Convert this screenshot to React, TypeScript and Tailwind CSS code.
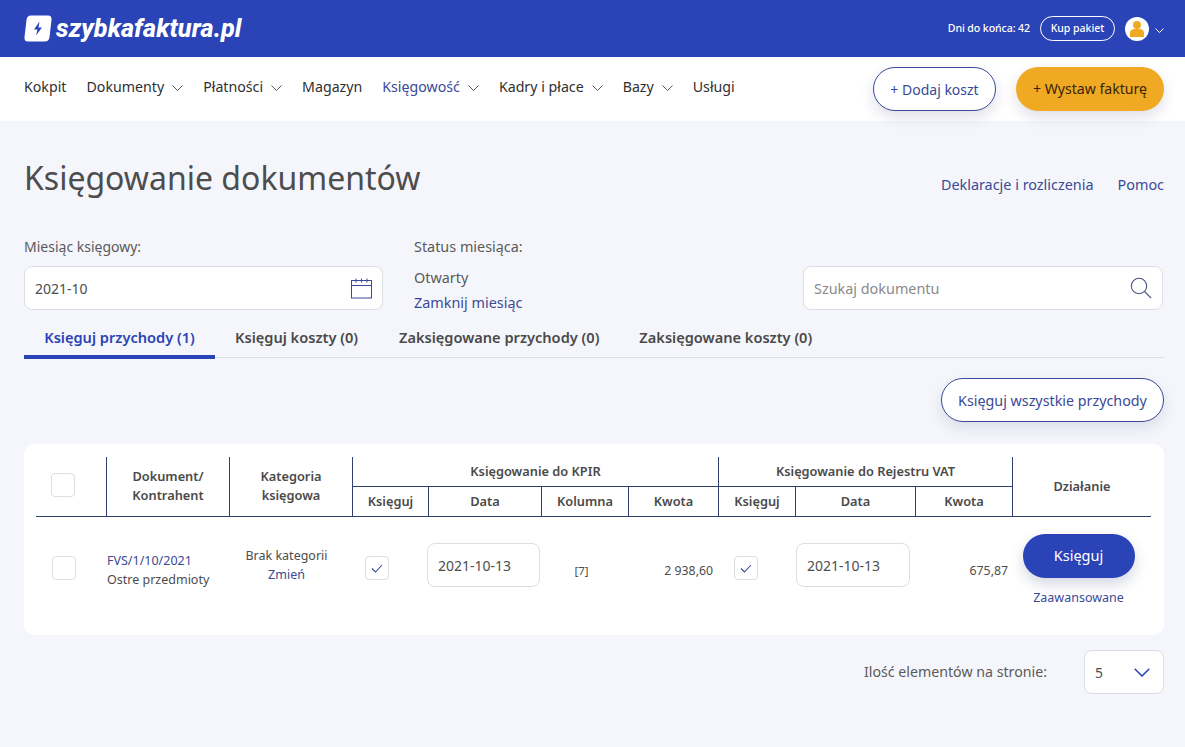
import React from "react";

const Chev = ({ className = "" }: { className?: string }) => (
  <svg width="11" height="6" viewBox="0 0 11 6" fill="none" stroke="#444" strokeWidth="0.9" className={className}>
    <path d="M0.5 0.5 L5.5 5.5 L10.5 0.5" />
  </svg>
);

const Nav = ({ children, chev, active }: { children: React.ReactNode; chev?: boolean; active?: boolean }) => (
  <div className={`flex items-center gap-[8px] text-[14.2px] ${active ? "text-[#3a4a96]" : "text-[#2f2f2f]"}`}>
    <span>{children}</span>
    {chev && <Chev className="mt-[3px]" />}
  </div>
);

const Check = ({ checked }: { checked?: boolean }) => (
  <div className="w-[24px] h-[24px] bg-white border border-[#dcdee6] rounded-[4px] flex items-center justify-center">
    {checked && (
      <svg width="12" height="9" viewBox="0 0 12 9" fill="none" stroke="#3a4a96" strokeWidth="1.1">
        <path d="M1 4.5 L4.5 8 L11 1" />
      </svg>
    )}
  </div>
);

const H = ({ className = "", children }: { className?: string; children?: React.ReactNode }) => (
  <div className={`flex items-center justify-center text-center text-[12.8px] font-semibold leading-[19px] text-[#4a4a4a] ${className}`}>
    {children}
  </div>
);

export default function App() {
  return (
    <div className="w-[1185px] h-[747px] overflow-hidden bg-[#f5f6fb] text-[#4d4d4d] font-['Noto_Sans','Open_Sans',sans-serif]">
      <header className="h-[57px] bg-[#2a43b7] flex items-center justify-between pl-[24px] pr-[21px]">
        <div className="flex items-center gap-[4px]">
          <svg width="28" height="27" viewBox="0 0 28 27">
            <path d="M7 0.5 H24 Q28 0.5 27.5 5 L25.5 22 Q25 26.5 20.5 26.5 H4 Q0 26.5 0.5 22 L2.5 5 Q3 0.5 7 0.5 Z" fill="#fff" />
            <path d="M15.5 6.5 L10 14.5 H13.5 L12 20.5 L18 12.5 H14.5 Z" fill="#2a43b7" />
          </svg>
          <span className="text-white text-[25.2px] font-extrabold italic tracking-[0.1px] font-['Roboto',sans-serif] leading-none">szybkafaktura.pl</span>
        </div>
        <div className="flex items-center">
          <span className="text-white text-[10.6px] font-medium tracking-[-0.1px]">Dni do końca: 42</span>
          <div className="ml-[10px] w-[75px] h-[25px] rounded-full border border-white text-white text-[10.5px] font-medium flex items-center justify-center">Kup pakiet</div>
          <div className="ml-[10px] w-[24px] h-[24px] rounded-full bg-white flex items-center justify-center">
            <svg width="16" height="17" viewBox="0 0 16 17" fill="#f0a922">
              <circle cx="8" cy="5" r="4" />
              <path d="M1 17 V13 Q1 9.5 5 9 H11 Q15 9.5 15 13 V17 Z" />
            </svg>
          </div>
          <svg width="9" height="5" viewBox="0 0 9 5" fill="none" stroke="#fff" strokeWidth="1" className="ml-[6px] mt-[4px]">
            <path d="M0.5 0.5 L4.5 4.5 L8.5 0.5" />
          </svg>
        </div>
      </header>

      <nav className="h-[64px] bg-white flex items-center justify-between pl-[24px] pr-[21px]">
        <div className="flex items-center gap-[20px] -mt-[4px]">
          <Nav>Kokpit</Nav>
          <Nav chev>Dokumenty</Nav>
          <Nav chev>Płatności</Nav>
          <Nav>Magazyn</Nav>
          <Nav chev active>Księgowość</Nav>
          <Nav chev>Kadry i płace</Nav>
          <Nav chev>Bazy</Nav>
          <Nav>Usługi</Nav>
        </div>
        <div className="flex items-center gap-[20px]">
          <div className="w-[123px] h-[44px] rounded-full bg-white border border-[#3a4a96] text-[#3a4a96] text-[14px] flex items-center justify-center shadow-[0_6px_14px_rgba(40,50,110,0.15)]">+ Dodaj koszt</div>
          <div className="w-[148px] h-[44px] rounded-full bg-[#f0a922] text-[#3a2408] text-[14.1px] flex items-center justify-center shadow-[0_6px_14px_rgba(40,50,110,0.15)]">+ Wystaw fakturę</div>
        </div>
      </nav>

      <main className="pl-[24px] pr-[21px]">
        <div className="flex items-start justify-between pt-[34px] h-[110px]">
          <h1 className="text-[32px] leading-[46px] text-[#4d4d4d]">Księgowanie dokumentów</h1>
          <div className="flex gap-[24px] text-[14.4px] text-[#3a4a96] pt-[19px]">
            <span>Deklaracje i rozliczenia</span>
            <span>Pomoc</span>
          </div>
        </div>

        <div className="flex h-[93px] items-start">
          <div className="w-[359px]">
            <div className="text-[14px] leading-[20px] mb-[9px] mt-[6px] text-[#5a5a5a]">Miesiąc księgowy:</div>
            <div className="h-[44px] bg-white border border-[#dcdee6] rounded-[8px] flex items-center justify-between pl-[10px] pr-[10px] text-[14px]">
              <span className="pt-[1px]">2021-10</span>
              <svg width="21" height="21" viewBox="0 0 21 21" fill="none" stroke="#3a4a96" strokeWidth="1">
                <rect x="0.5" y="2.5" width="20" height="17.5" />
                <path d="M0.5 7.5 H20.5 M5 0.5 V4.5 M10.5 0.5 V4.5 M16 0.5 V4.5" />
              </svg>
            </div>
          </div>
          <div className="ml-[31px] w-[389px]">
            <div className="text-[14.4px] leading-[20px] mt-[6px] text-[#5a5a5a]">Status miesiąca:</div>
            <div className="text-[14.4px] leading-[20px] mt-[11px] text-[#5a5a5a]">Otwarty</div>
            <div className="text-[14.4px] leading-[20px] mt-[5px] text-[#3a4a96]">Zamknij miesiąc</div>
          </div>
          <div className="w-[360px] h-[44px] mt-[35px] bg-white border border-[#dcdee6] rounded-[8px] flex items-center justify-between pl-[10px] pr-[10px] text-[14.4px] text-[#8a8a8a]">
            <span className="pt-[1px]">Szukaj dokumentu</span>
            <svg width="22" height="22" viewBox="0 0 22 22" fill="none" stroke="#4a5580" strokeWidth="1.1">
              <circle cx="9" cy="9" r="7.7" />
              <path d="M14.5 14.5 L21 21" />
            </svg>
          </div>
        </div>

        <div className="flex h-[34px] border-b border-[#dcdee6] w-[1140px] text-[14.6px] font-semibold text-[#4a4a4a] leading-[20px]">
          <div className="w-[191px] h-[35px] pt-[3px] text-center text-[#2a43b7] border-b-[4px] border-[#2a43b7]">Księguj przychody (1)</div>
          <div className="ml-[20px] pt-[3px]">Księguj koszty (0)</div>
          <div className="ml-[41px] pt-[3px]">Zaksięgowane przychody (0)</div>
          <div className="ml-[40px] pt-[3px]">Zaksięgowane koszty (0)</div>
        </div>

        <div className="flex justify-end h-[86px] pt-[20px] w-[1140px]">
          <div className="w-[223px] h-[44px] pt-[1px] rounded-full bg-white border border-[#3a4a96] text-[#3a4a96] text-[14.3px] flex items-center justify-center shadow-[0_6px_14px_rgba(40,50,110,0.12)]">Księguj wszystkie przychody</div>
        </div>

        <section className="w-[1140px] h-[191px] bg-white rounded-[10px] pt-[13px] pl-[12px] pr-[13px]">
          <div className="grid grid-cols-[70px_123px_123px_76px_113px_87px_90px_77px_120px_97px_139px] grid-rows-[30px_29px] border-b border-[#2f3f6e]">
            <div className="row-span-2 flex items-center pl-[15px] pb-[4px]"><Check /></div>
            <H className="row-span-2 border-l border-[#2f3f6e] pb-[2px]">Dokument/<br />Kontrahent</H>
            <H className="row-span-2 border-l border-[#2f3f6e] pb-[2px]">Kategoria<br />księgowa</H>
            <H className="col-span-4 border-l border-b border-[#2f3f6e]">Księgowanie do KPIR</H>
            <H className="col-span-3 border-l border-b border-[#2f3f6e]">Księgowanie do Rejestru VAT</H>
            <H className="row-span-2 border-l border-[#2f3f6e]">Działanie</H>
            <H className="border-l border-[#2f3f6e]">Księguj</H>
            <H className="border-l border-[#2f3f6e]">Data</H>
            <H className="border-l border-[#2f3f6e]">Kolumna</H>
            <H className="border-l border-[#2f3f6e]">Kwota</H>
            <H className="border-l border-[#2f3f6e]">Księguj</H>
            <H className="border-l border-[#2f3f6e]">Data</H>
            <H className="border-l border-[#2f3f6e]">Kwota</H>
          </div>
          <div className="grid grid-cols-[70px_123px_123px_76px_113px_87px_90px_77px_120px_97px_139px] h-[100px] items-center text-[12.5px]">
            <div className="pl-[16px] pt-[2px]"><Check /></div>
            <div className="pl-[1px] pt-[6px] leading-[19px]">
              <div className="text-[#3a4a96]">FVS/1/10/2021</div>
              <div>Ostre przedmioty</div>
            </div>
            <div className="text-center leading-[19px] pr-[8px] -mt-[4px]">
              <div>Brak kategorii</div>
              <div className="text-[#3a4a96]">Zmień</div>
            </div>
            <div className="pl-[13px] pt-[2px]"><Check checked /></div>
            <div className="flex justify-center -ml-[2px] -mt-[4px]">
              <div className="w-[113px] h-[44px] bg-white border border-[#dcdee6] rounded-[8px] flex items-center pl-[10px] text-[14px]">2021-10-13</div>
            </div>
            <div className="text-center pt-[8px] pr-[6px] text-[11.5px]">[7]</div>
            <div className="text-right pr-[5px] pt-[8px] text-[12.3px]">2 938,60</div>
            <div className="pl-[16px] pt-[2px]"><Check checked /></div>
            <div className="pl-[1px] -mt-[4px]">
              <div className="w-[114px] h-[44px] bg-white border border-[#dcdee6] rounded-[8px] flex items-center pl-[10px] text-[14px]">2021-10-13</div>
            </div>
            <div className="text-right pr-[4px] pt-[8px] text-[12.3px]">675,87</div>
            <div className="flex flex-col items-center self-start pt-[17px] -ml-[6px]">
              <div className="w-[112px] h-[44px] rounded-full bg-[#2a43b7] text-white text-[14.5px] flex items-center justify-center shadow-[0_6px_14px_rgba(40,50,110,0.2)]">Księguj</div>
              <div className="text-[#3a4a96] mt-[11px] leading-[18px]">Zaawansowane</div>
            </div>
          </div>
        </section>

        <div className="flex items-center justify-end w-[1140px] mt-[15px]">
          <span className="text-[14.2px] text-[#5a5a5a]">Ilość elementów na stronie:</span>
          <div className="ml-[37px] w-[80px] h-[44px] bg-white border border-[#dcdee6] rounded-[8px] flex items-center justify-between pl-[10px] pr-[13px] text-[14px]">
            <span>5</span>
            <svg width="16" height="9" viewBox="0 0 16 9" fill="none" stroke="#2a43b7" strokeWidth="1.5">
              <path d="M0.7 0.7 L8 8 L15.3 0.7" />
            </svg>
          </div>
        </div>
      </main>
    </div>
  );
}
